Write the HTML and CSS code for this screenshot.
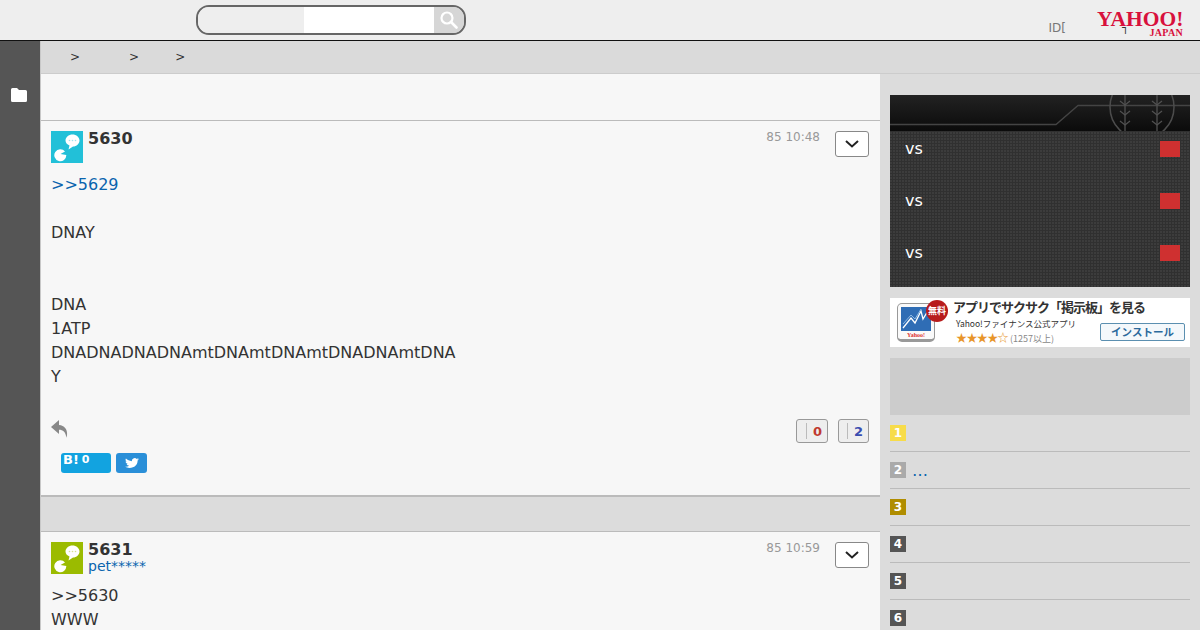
FILE: index.html
```html
<!DOCTYPE html>
<html lang="ja">
<head>
<meta charset="utf-8">
<title>掲示板</title>
<link rel="stylesheet" href="styles.css">
</head>
<body>
<header class="topbar">
  <form class="search">
    <div class="search-cat"></div>
    <div class="search-input"></div>
    <div class="search-btn">
      <svg width="18" height="18" viewBox="0 0 18 18"><circle cx="7" cy="7" r="5.500" fill="none" stroke="#fff" stroke-width="2.200"/><path d="M11 11l5.500 5.500" stroke="#fff" stroke-width="2.600" stroke-linecap="round"/></svg>
    </div>
  </form>
  <div class="login">ID[</div>
  <div class="logo">
    <div class="logo-main">YAHOO!</div>
    <div class="logo-sub">JAPAN</div>
    <span class="logo-mark">┐</span>
  </div>
</header>
<div class="shell">
  <nav class="rail">
    <svg class="folder" width="16" height="14" viewBox="0 0 16 14"><path d="M0 1.500Q0 0 1.500 0H6l2 2h6.500Q16 2 16 3.500V12.500Q16 14 14.500 14H1.500Q0 14 0 12.500z" fill="#fff"/></svg>
  </nav>
  <div class="page">
    <div class="crumbs"><span class="c1">&gt;</span><span class="c2">&gt;</span><span class="c3">&gt;</span></div>
    <div class="columns">
      <main class="main">
        <div class="main-top"></div>
        <article class="post">
          <div class="post-head">
            <svg class="avatar" width="32" height="32" viewBox="0 0 32 32"><rect width="32" height="32" fill="#22c0d8"/><path d="M14.500 9.500c0-3.300 3.200-6 7-6s7 2.700 7 6-3 6-6.500 6l-4.500 3 1-4C16 13.500 14.500 11.800 14.500 9.500z" fill="#fff"/><circle cx="18.500" cy="9.500" r=".8" fill="#9fe3ee"/><circle cx="21.500" cy="9.500" r=".8" fill="#9fe3ee"/><circle cx="24.500" cy="9.500" r=".8" fill="#9fe3ee"/><path d="M9.500 23L14 20.500A6 6 0 1 0 15.300 24z" fill="#fff"/></svg>
            <div class="who"><div class="num">5630</div></div>
            <div class="time">85 10:48</div>
            <button class="more" type="button"><svg width="14" height="8" viewBox="0 0 14 8"><path d="M1 1l6 5.500L13 1" fill="none" stroke="#222" stroke-width="2"/></svg></button>
          </div>
          <div class="post-body">
            <a class="link">&gt;&gt;5629</a><br><br>DNAY<br><br><br>DNA<br>1ATP<br>DNADNADNADNAmtDNAmtDNAmtDNADNAmtDNA<br>Y
          </div>
          <div class="post-actions">
            <svg width="17" height="18" viewBox="0 0 17 18"><path d="M8 0L0 7l8 7v-4.200c4 0 6.500 2 7.500 8 1.800-6.500-.5-12-7.500-12.800z" fill="#888"/></svg>
            <div class="votes">
              <div class="vote"><i></i><b class="red">0</b></div>
              <div class="vote"><i></i><b class="blue">2</b></div>
            </div>
          </div>
          <div class="share">
            <div class="hatena"><b>B!</b><b class="cnt">0</b></div>
            <div class="tweet"><svg width="14" height="12" viewBox="0 0 24 24" preserveAspectRatio="none"><path d="M23.950 4.570a10 10 0 0 1-2.820.77 4.960 4.960 0 0 0 2.160-2.720c-.95.55-2 .96-3.120 1.180a4.920 4.920 0 0 0-8.380 4.480C7.690 8.090 4.070 6.130 1.640 3.160a4.820 4.820 0 0 0-.67 2.480c0 1.710.87 3.210 2.190 4.100a4.900 4.900 0 0 1-2.230-.62v.06c0 2.390 1.700 4.380 3.950 4.830a5 5 0 0 1-2.210.08 4.940 4.940 0 0 0 4.600 3.420A9.870 9.870 0 0 1 0 19.540a14 14 0 0 0 7.560 2.210c9.050 0 14-7.500 14-13.980 0-.21 0-.42-.02-.63a9.940 9.940 0 0 0 2.460-2.550z" fill="#fff"/></svg></div>
          </div>
        </article>
        <div class="band"></div>
        <article class="post">
          <div class="post-head">
            <svg class="avatar" width="32" height="32" viewBox="0 0 32 32"><rect width="32" height="32" fill="#9bbb00"/><path d="M14.500 9.500c0-3.300 3.200-6 7-6s7 2.700 7 6-3 6-6.500 6l-4.500 3 1-4C16 13.500 14.500 11.800 14.500 9.500z" fill="#fff"/><circle cx="18.500" cy="9.500" r=".8" fill="#d5e38a"/><circle cx="21.500" cy="9.500" r=".8" fill="#d5e38a"/><circle cx="24.500" cy="9.500" r=".8" fill="#d5e38a"/><path d="M9.500 23L14 20.500A6 6 0 1 0 15.300 24z" fill="#fff"/></svg>
            <div class="who"><div class="num">5631</div><a class="user">pet*****</a></div>
            <div class="time">85 10:59</div>
            <button class="more" type="button"><svg width="14" height="8" viewBox="0 0 14 8"><path d="M1 1l6 5.500L13 1" fill="none" stroke="#222" stroke-width="2"/></svg></button>
          </div>
          <div class="post-body">&gt;&gt;5630<br>WWW</div>
        </article>
      </main>
      <aside class="side">
        <section class="games">
          <div class="games-head">
            <svg width="300" height="36" viewBox="0 0 300 36"><path d="M0 29.500H166L188 10.500H300" fill="none" stroke="#444" stroke-width="1.300"/><circle cx="252" cy="12" r="32" fill="none" stroke="#4c4c4c" stroke-width="1.500"/><g fill="none" stroke="#505050" stroke-width="1.300"><path d="M235 0V36M267 0V36"/><path d="M230 6l5 4 5-4M230 16l5 4 5-4M230 26l5 4 5-4M262 6l5 4 5-4M262 16l5 4 5-4M262 26l5 4 5-4"/></g></svg>
          </div>
          <div class="game"><span>vs</span><i></i></div>
          <div class="game"><span>vs</span><i></i></div>
          <div class="game"><span>vs</span><i></i></div>
        </section>
        <section class="ad">
          <div class="ad-icon">
            <svg width="30" height="24" viewBox="0 0 30 24"><rect width="30" height="24" fill="#2f6db5"/><path d="M2 21l8-10 4 5 6-12 2 8 6-10" fill="none" stroke="#fff" stroke-width="1.300"/><path d="M2 17l8-9 4 4 6-10" fill="none" stroke="#8fb9e4" stroke-width="1"/></svg>
            <span class="ad-yahoo">Yahoo!</span>
            <span class="ad-free">無料</span>
          </div>
          <div class="ad-text">
            <div class="ad-title">アプリでサクサク「掲示板」を見る</div>
            <div class="ad-row">
              <div>
                <div class="ad-sub">Yahoo!ファイナンス公式アプリ</div>
                <div class="ad-rate"><span class="stars">★★★★☆</span> (1257以上)</div>
              </div>
              <div class="ad-btn">インストール</div>
            </div>
          </div>
        </section>
        <section class="gray-box"></section>
        <ol class="rank">
          <li><span class="badge gold">1</span></li>
          <li><span class="badge silver">2</span><a class="link dots">…</a></li>
          <li><span class="badge bronze">3</span></li>
          <li><span class="badge">4</span></li>
          <li><span class="badge">5</span></li>
          <li><span class="badge">6</span></li>
        </ol>
      </aside>
    </div>
  </div>
</div>
</body>
</html>
```
FILE: styles.css
```css
* { box-sizing: border-box; }
html, body { margin: 0; height: 630px; overflow: hidden; }
body { font-family: "DejaVu Sans", sans-serif; color: #333; background: #555; }

.topbar { height: 41px; background: #eee; border-bottom: 1px solid #111; display: flex; align-items: flex-start; padding: 5px 15px 0 196px; }
.search { width: 270px; height: 30px; border: 2px solid #666; border-radius: 13px; display: flex; overflow: hidden; margin: 0; }
.search-cat { width: 106px; background: #eee; }
.search-input { width: 130px; background: #fff; }
.search-btn { flex: 1; background: #d6d6d6; display: flex; align-items: center; justify-content: center; }
.login { margin-left: auto; margin-top: 15px; font-size: 12px; line-height: 16px; color: #777; }
.logo { position: relative; width: 88px; margin-left: 31px; margin-top: 3px; display: flex; flex-direction: column; align-items: flex-start; color: #d8103c; font-family: "Liberation Serif", serif; font-weight: 700; }
.logo-main { font-size: 21.500px; line-height: 23px; white-space: nowrap; }
.logo-sub { font-size: 10px; line-height: 10px; margin-top: -3px; align-self: flex-end; margin-right: 2px; letter-spacing: .3px; }
.logo-mark { position: absolute; left: 25px; top: 14px; font: 11px/12px "DejaVu Sans", sans-serif; color: #333; }

.shell { display: flex; height: 589px; }
.rail { width: 40px; flex: none; background: #555; padding: 47px 0 0 11px; }
.folder { display: block; }
.page { flex: 1; min-width: 0; background: #dcdcdc; border-left: 1px solid #c8c8c8; }
.crumbs { height: 33px; background: #dadada; border-bottom: 1px solid #ccc; font-size: 12px; line-height: 32px; display: flex; padding-left: 29px; }
.c2 { margin-left: 49px; }
.c3 { margin-left: 36px; }

.columns { display: flex; }
.main { width: 839px; flex: none; background: #f7f7f7; }
.main-top { height: 47px; border-bottom: 1px solid #bbb; }
.post { padding: 10px 11px 22px 10px; }
.post-head { display: flex; align-items: flex-start; height: 42px; }
.avatar { flex: none; display: block; }
.who { margin-left: 5px; flex: 1; }
.num { font-size: 16px; font-weight: 700; line-height: 15px; color: #333; }
.user { display: block; font-size: 14px; line-height: 16px; margin-top: 1px; color: #0a64ae; }
.time { font-size: 12px; line-height: 13px; color: #999; margin-right: 15px; }
.more { width: 34px; height: 26px; padding: 0; background: #fff; border: 1px solid #888; border-radius: 3px; display: flex; align-items: center; justify-content: center; }
.post-body { font-size: 16px; line-height: 24px; color: #333; }
.link { color: #0a64ae; }
.post-actions { display: flex; justify-content: space-between; align-items: flex-start; margin-top: 30px; height: 24px; }
.post-actions svg { margin-top: 1px; }
.votes { display: flex; gap: 10px; }
.vote { height: 24px; padding: 0 5px 0 0; border: 1px solid #999; border-radius: 3px; background: #eee; display: flex; align-items: center; justify-content: flex-end; font-size: 13px; width: 32px; }
.vote + .vote { width: 31px; }
.vote i { width: 1px; height: 16px; background: #bbb; margin-right: 6px; }
.red { color: #c0392f; }
.blue { color: #3a4db0; }
.share { display: flex; gap: 5px; margin: 10px 0 0 10px; height: 20px; }
.hatena { width: 50px; border-radius: 3px; background: #12a3e0; color: #fff; font-size: 13px; line-height: 14px; padding-left: 2px; display: flex; gap: 3px; align-items: flex-start; }
.hatena .cnt { font-size: 11px; }
.tweet { width: 31px; border-radius: 3px; background: #2a8fd8; display: flex; align-items: center; justify-content: center; }
.band { height: 37px; background: #dcdcdc; border-top: 2px solid #bbb; border-bottom: 1px solid #bbb; }

.side { flex: 1; min-width: 0; padding: 21px 10px 0 10px; }
.games { background-color: #3c3c3c; background-image: repeating-linear-gradient(90deg, transparent 0 2px, #303030 2px 3px), repeating-linear-gradient(0deg, transparent 0 2px, #303030 2px 3px); }
.games-head { height: 36px; background: linear-gradient(#222, #0b0b0b); overflow: hidden; }
.games-head svg { display: block; }
.game { height: 52px; padding: 8px 10px 0 15px; display: flex; justify-content: space-between; align-items: flex-start; color: #fff; font-size: 16px; line-height: 20px; }
.game i { width: 20px; height: 16px; margin-top: 2px; background: #cf3030; }
.ad { margin-top: 11px; height: 49px; background: #fff; display: flex; padding: 5px 5px 0 7px; }
.ad-icon { position: relative; width: 38px; height: 39px; flex: none; border: 1px solid #999; border-bottom-width: 3px; border-radius: 5px; background: #fafafa; padding: 3px 3px 0; }
.ad-icon svg { display: block; }
.ad-yahoo { display: block; font: 700 6px/8px "Liberation Serif", serif; color: #d33; text-align: center; }
.ad-free { position: absolute; right: -14px; top: -4px; width: 22px; height: 22px; border-radius: 50%; background: #b71c1c; color: #fff; font: 700 9px/22px "Noto Sans CJK JP", sans-serif; text-align: center; }
.ad-text { flex: 1; margin-left: 18px; margin-top: -4px; }
.ad-title { font: 700 13px/16px "Noto Sans CJK JP", sans-serif; letter-spacing: -1px; color: #333; white-space: nowrap; }
.ad-row { display: flex; justify-content: space-between; align-items: flex-start; margin-top: 1px; }
.ad-sub { font: 8.500px/14px "Noto Sans CJK JP", sans-serif; color: #333; margin-left: 3px; white-space: nowrap; }
.ad-rate { font: 9px/14px "Noto Sans CJK JP", sans-serif; color: #888; margin-left: 3px; white-space: nowrap; }
.stars { color: #e8952a; font-size: 11px; letter-spacing: -.6px; }
.ad-btn { width: 85px; height: 18px; margin-top: 7px; border: 1px solid #5b8fb0; border-radius: 2px; background: #f4f8fb; color: #2c6a9c; font: 700 10.500px/16px "Noto Sans CJK JP", sans-serif; text-align: center; }
.gray-box { margin-top: 11px; height: 57px; background: #ccc; }
.rank { list-style: none; margin: 0; padding: 0; }
.rank li { height: 37px; padding-top: 10px; border-bottom: 1px solid #bbb; display: flex; gap: 6px; }
.badge { width: 16px; height: 16px; background: #555; color: #fff; font-size: 12px; font-weight: 700; line-height: 16px; text-align: center; }
.gold { background: #f7dc4a; }
.silver { background: #aaa; }
.bronze { background: #b08d00; }
.dots { font-size: 16px; line-height: 20px; margin-top: -1px; }
```
